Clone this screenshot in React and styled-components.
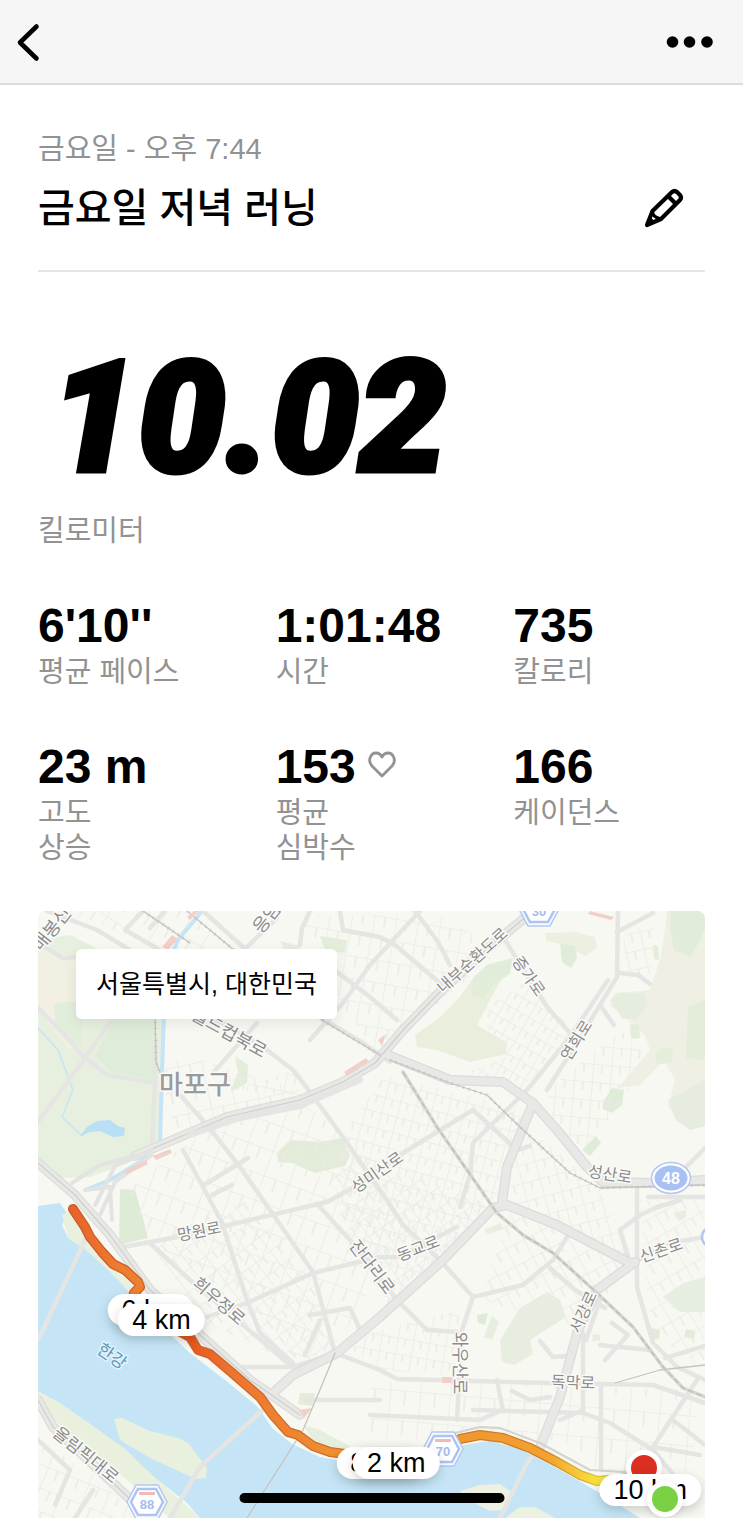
import React from "react";
import styled, { createGlobalStyle } from "styled-components";

const GlobalStyle = createGlobalStyle`
  * { box-sizing: border-box; }
  body {
    margin: 0;
    background: #fff;
    color: #000;
    font-family: "Liberation Sans", "Noto Sans CJK KR", sans-serif;
  }
`;

const NavBar = styled.header`
  display: flex;
  align-items: center;
  justify-content: space-between;
  height: 85px;
  padding: 0 25px 0 14px;
  background: #f6f6f6;
  border-bottom: 2px solid #dcdcdc;
`;

const IconButton = styled.button`
  display: flex;
  padding: 0;
  border: 0;
  background: none;
  color: #000;
  cursor: pointer;
`;

const Content = styled.main`
  padding: 0 38px;
`;

const RunHeader = styled.section`
  padding: 44px 0 32px;
  border-bottom: 2px solid #e5e5e5;
`;

const RunDate = styled.p`
  margin: 0;
  font-size: 29px;
  line-height: 40px;
  color: #929292;
`;

const TitleRow = styled.div`
  display: flex;
  align-items: center;
  justify-content: space-between;
  height: 60px;
  margin-top: 9px;
  padding-right: 18px;
`;

const RunTitle = styled.h1`
  margin: 0;
  font-size: 40px;
  line-height: 60px;
  font-weight: 500;
`;

const Distance = styled.section`
  padding: 56px 0 0;
`;

const DistanceValue = styled.p`
  margin: 0;
  padding: 0 0 6px 12px;
  font-family: Roboto, sans-serif;
  font-size: 156px;
  line-height: 180px;
  font-weight: 900;
  font-style: italic;
  -webkit-text-stroke: 5px #000;
`;

const Label = styled.span`
  display: block;
  font-size: 29px;
  line-height: 35px;
  color: #929292;
  white-space: pre-line;
`;

const StatsGrid = styled.dl`
  display: grid;
  grid-template-columns: repeat(3, 1fr);
  column-gap: 46px;
  row-gap: 47px;
  margin: 47px 0 45px;
`;

const Stat = styled.div`
  display: flex;
  flex-direction: column-reverse;
  justify-content: flex-end;
`;

const StatValue = styled.dd`
  display: flex;
  align-items: center;
  gap: 12px;
  margin: 0;
  font-size: 48px;
  line-height: 59px;
  font-weight: 700;
  white-space: nowrap;
`;

const MapCard = styled.section`
  position: relative;
  aspect-ratio: 667 / 607;
  border-radius: 8px 8px 0 0;
  overflow: hidden;
  background: #f7f8f2;
`;

const MapDrawing = styled.svg`
  display: block;
  width: 100%;
  height: 100%;
`;

const PlaceTag = styled.div`
  position: absolute;
  top: 38px;
  left: 38px;
  padding: 0 20px;
  border-radius: 6px;
  background: #fff;
  box-shadow: 0 4px 14px rgba(0, 0, 0, 0.08);
  font-size: 25px;
  line-height: 70px;
  white-space: nowrap;
`;

const KmPin = styled.span`
  position: absolute;
  left: ${(p) => p.$x}%;
  top: ${(p) => p.$y}%;
  transform: translate(-50%, -50%);
  padding: 0 14px;
  border-radius: 16px;
  background: #fff;
  box-shadow: 0 4px 12px rgba(0, 0, 0, 0.18);
  font-size: 27px;
  line-height: 32px;
  white-space: nowrap;
`;

const EndPin = styled.span`
  position: absolute;
  left: ${(p) => p.$x}%;
  top: ${(p) => p.$y}%;
  transform: translate(-50%, -50%);
  width: 36px;
  height: 36px;
  border: 5px solid #fff;
  border-radius: 50%;
  background: ${(p) => p.$color};
  box-shadow: 0 2px 6px rgba(0, 0, 0, 0.12);
`;

const HomeIndicator = styled.div`
  position: fixed;
  bottom: 15px;
  left: 50%;
  transform: translateX(-50%);
  width: 265px;
  height: 10px;
  border-radius: 5px;
  background: #000;
`;

const STATS = [
  { value: "6'10''", label: "평균 페이스" },
  { value: "1:01:48", label: "시간" },
  { value: "735", label: "칼로리" },
  { value: "23 m", label: "고도\n상승" },
  { value: "153", label: "평균\n심박수", heart: true },
  { value: "166", label: "케이던스" },
];

const PARKS = [
  ["#e7efdf", "38,940 70,935 110,955 165,985 163,1075 158,1145 128,1163 90,1177 60,1178 38,1166"],
  ["#dfecd9", "108,1030 118,1010 155,1010 155,1080 112,1072 95,1056"],
  ["#f1f0e2", "38,948 70,955 85,965 80,1040 70,1050 38,1010"],
  ["#e1eedb", "54,1004 84,1000 82,1045 72,1044 56,1030"],
  ["#e3ecd9", "277,1153 290,1140 320,1142 342,1138 350,1155 345,1166 315,1173 292,1163 278,1162"],
  ["#deebd7", "120,1189 135,1190 142,1215 148,1238 119,1245"],
  ["#e3edda", "235,1056 248,1065 247,1083 230,1092 238,1072"],
  ["#e3edda", "320,936 347,940 345,953 325,950"],
  ["#e7eedf", "280,941 300,946 299,950 284,950"],
  ["#e9eedd", "415,1035 437,1020 460,997 473,978 487,965 513,958 507,972 498,985 490,1000 477,1025 507,1043 506,1054 470,1062 437,1050 417,1047"],
  ["#e2edd9", "473,978 487,965 513,958 510,974 494,984 484,998 472,995"],
  ["#edf0e0", "545,933 575,932 595,937 597,947 586,956 560,944 546,941"],
  ["#deecd8", "560,943 575,946 577,958 571,968 562,962"],
  ["#efefe3", "667,911 705,911 705,1126 690,1130 668,1107 675,1080 664,1060 640,1085 618,1088 650,1050 645,1035 610,1005 615,993 650,990 660,960 665,930"],
  ["#e1edda", "671,911 705,911 705,930 691,957 674,950 670,930"],
  ["#e5eede", "610,1000 620,993 645,993 648,1005 636,1020 622,1018"],
  ["#e3edda", "688,1007 705,1000 705,1060 686,1058"],
  ["#e6ede0", "668,1100 705,1080 705,1126 690,1130 676,1120"],
  ["#e3eedb", "655,1054 664,1047 674,1050 671,1063 657,1064"],
  ["#deecd8", "603,1102 612,1088 624,1090 622,1105 612,1113 603,1109"],
  ["#deecd8", "582,1150 596,1136 601,1143 590,1156"],
  ["#e3edda", "653,945 658,946 659,960 654,959"],
  ["#e3edda", "630,1024 639,1025 640,1038 631,1039"],
  ["#e7eedf", "500,1340 520,1308 547,1292 560,1300 566,1317 530,1340 533,1354 514,1365 502,1362"],
  ["#deebd7", "477,1315 488,1313 485,1325 478,1323"],
  ["#e5eedf", "492,1316 499,1322 492,1340 484,1337"],
  ["#e5eedf", "663,1297 683,1283 705,1277 705,1312 680,1312"],
  ["#e5eedf", "593,1334 600,1335 600,1341 592,1341"],
  ["#e0ecd8", "651,1328 660,1330 659,1339 653,1339"],
  ["#e0ecd8", "686,1329 695,1331 694,1339 684,1337"],
  ["#e5eedf", "673,1213 686,1210 686,1217 679,1221"],
  ["#e8efe0", "484,1230 500,1223 504,1229 488,1234"],
  ["#e3edda", "300,1393 315,1393 313,1406 298,1404"],
];

const WATER = "M38 1206L60 1203 68 1215 62 1225 68 1238 85 1249 110 1270 130 1293 160 1325 190 1353 225 1380 258 1407 272 1428 292 1444 320 1457 360 1464 420 1460 450 1447 490 1441 520 1449 560 1470 600 1493 640 1518H200L186 1502 150 1474 120 1446 90 1424 60 1404 38 1392Z";

const SHORES = [
  ["#e9f0dd", "38,1391 60,1403 90,1424 125,1449 150,1473 200,1518 170,1518 120,1474 80,1442 38,1406"],
  ["#e9f0dd", "114,1419 122,1418 150,1431 178,1438 188,1443 207,1468 206,1478 196,1479 150,1458 120,1440"],
  ["#edf0e2", "460,1491 480,1485 500,1484 512,1492 507,1510 490,1511 472,1502"],
  ["#edf1e0", "505,1518 520,1507 535,1507 555,1518"],
  ["#e9f0dd", "62,1215 73,1210 90,1240 112,1268 135,1287 130,1292 108,1270 84,1248 68,1238"],
  ["#e6efdf", "303,1425 320,1430 355,1449 345,1453 315,1443"],
];

const MAJOR = [
  "M38 1122L85 1058 115 1015 150 965",
  "M38 1008L60 1030 85 1058 108 1075 155 1083",
  "M156 1040L155 1084 152 1147",
  "M203 911L243 947 313 1013 363 1043 390 1062",
  "M277 918L247 947 225 970",
  "M47 911L97 930 130 950M38 943L63 958 90 956",
  "M143 911L125 930 160 950M165 911L150 928",
  "M310 911L302 928 300 945",
  "M340 911L343 930 380 937 395 945 440 983",
  "M420 911L370 965 343 1003 310 1040",
  "M415 911L438 942 450 965",
  "M337 972L370 997 397 1020",
  "M505 940L547 1007 570 1033",
  "M618 911L617 977 583 1033 547 1090",
  "M608 980L570 1037 527 1090 473 1143 470 1175 460 1207",
  "M617 932L653 913M620 973L638 975 650 984M600 1005L614 1025",
  "M183 1000L263 1047 293 1070 307 1088 345 1140 387 1200 403 1225 440 1260 473 1297 462 1330 457 1420",
  "M213 1073L257 1023",
  "M180 1095L207 1125 240 1167 263 1200 313 1272 335 1353",
  "M183 1150L210 1200 222 1223 247 1300 260 1333 293 1363",
  "M204 1185L248 1158M212 1195L232 1185",
  "M123 1247L177 1237 220 1227 327 1202 358 1185 403 1153 473 1110",
  "M473 1110L517 1150 530 1146",
  "M317 1204L350 1240 397 1300 427 1330 457 1332",
  "M150 1243L190 1280 290 1365",
  "M207 1317L247 1303 313 1273 380 1257 400 1257 457 1227",
  "M335 1353L380 1370 397 1379 547 1383 653 1385 705 1403",
  "M243 1367L293 1367 337 1353",
  "M473 1297L523 1285 553 1260 567 1237",
  "M370 1415L480 1420 500 1411M473 1410L583 1413 610 1423 653 1450 690 1495",
  "M697 1380L653 1447 700 1455M673 1420L705 1445",
  "M497 1380L503 1411M512 1391L530 1400 550 1397",
  "M601 1385V1470M600 1345L650 1350M705 1346L665 1358",
  "M637 1187V1287L653 1343 677 1367 705 1380",
  "M630 1263L620 1230 640 1215 662 1205",
  "M633 1263L670 1243 705 1237",
  "M550 1268L575 1290 605 1308M540 1341L553 1357 567 1356M612 1323L628 1335 605 1360",
  "M648 1197H705M655 1208L680 1200M705 1148L675 1178",
  "M267 1406L200 1467 170 1518M85 1240L65 1283 38 1340",
  "M540 1447L527 1463 500 1518",
  "M38 1440L70 1470 55 1505M93 1490L75 1518",
  "M305 1400H380",
  "M583 1333L583 1410 560 1420M600 1300L586 1340",
  "M310 1315L350 1308 360 1330M320 1320L305 1355",
];

const TRUNK = [
  "M135 1156L227 1117 300 1100 343 1082 375 1063 403 1030 437 995 480 955 522 920 545 911",
  "M385 1054L450 1080 503 1082 533 1103 557 1130 587 1167 603 1182 653 1183 705 1180",
  "M533 1103L507 1167 502 1203",
  "M273 1393L293 1375 337 1353 380 1317 443 1260 493 1208 507 1205 557 1225 630 1263",
  "M635 1262L597 1290 577 1333 560 1397 540 1447",
  "M38 1163L75 1195 110 1235 150 1290 200 1335 250 1380 300 1415",
  "M38 1400L53 1427 113 1483 150 1518",
];

const RAILS = [
  "M143 911L190 943M187 911L240 955 317 1017 380 1055",
  "M155 1010L156 1062 161 1075",
  "M390 1060L450 1083 487 1095 520 1127 570 1173 600 1188 705 1185",
  "M335 1353L322 1385 303 1430 247 1518",
  "M615 1383L660 1370 705 1365",
];

const GREENWAY = "M403 1072L437 1127 490 1203 497 1213 523 1235 553 1253 597 1293 633 1327 663 1367 683 1388 705 1397";

const STREET_AREAS = [
  [20, 26, "225,1115 300,1100 385,1170 400,1257 330,1350 300,1362 240,1300 150,1240 125,1190"],
  [-12, 24, "200,1060 300,1090 180,1140 165,1100 165,1060"],
  [-38, 18, "150,1245 245,1200 310,1275 335,1350 290,1362 200,1320"],
  [15, 16, "385,1075 525,1110 500,1200 390,1310 340,1200 345,1130"],
  [-35, 17, "330,1150 500,1205 400,1300 345,1250"],
  [30, 14, "480,1010 530,980 575,1035 520,1090 460,1075 500,1060"],
  [10, 22, "300,915 440,915 500,950 380,1055 345,1010"],
  [-15, 18, "510,1110 600,1190 635,1260 510,1200"],
  [10, 16, "340,1340 460,1310 455,1375 380,1370"],
  [5, 30, "370,1380 700,1390 690,1480 600,1470 560,1440 370,1440"],
  [-30, 20, "640,1200 705,1200 705,1370 650,1330"],
  [-12, 18, "625,930 655,925 650,975 620,970"],
  [22, 22, "38,1440 100,1480 140,1518 38,1518"],
  [32, 24, "70,911 190,911 225,955 150,945"],
  [12, 18, "230,1090 300,1070 300,1095"],
  [-28, 20, "510,1210 630,1265 580,1330 480,1300"],
  [5, 18, "548,1090 620,1030 650,1060 580,1160 550,1120"],
];

const TINTS = [
  "M162 947L172 935 178 939 168 950Z",
  "M187 917L194 911 199 911 190 920Z",
  "M344 1072L366 1058 369 1062 347 1076Z",
  "M153 1156L170 1149 172 1153 156 1160Z",
  "M124 1171L146 1160 148 1164 126 1175Z",
  "M442 1377H453V1383H442Z",
  "M590 911L614 917 611 920 588 914Z",
  "M378 1040L386 1034 382 1046Z",
  "M299 1410L312 1408 304 1418Z",
];

const ROUTE_WEST = "M73 1209L85 1227 90 1237 102 1252 113 1264 125 1270 138 1282 140 1287 134 1293 150 1315 190 1337 198 1350 210 1354 230 1371 260 1397 273 1415 288 1432 298 1435 313 1446 330 1452 345 1454";
const ROUTE_EAST = "M430 1452L460 1439 480 1435 503 1438 530 1448 557 1462 580 1475 597 1481 630 1478";

const ROAD_NAMES = [
  ["매봉신", 52, 929, -52, 18],
  ["응암", 267, 918, -52, 18],
  ["월드컵북로", 229, 1033, 29, 18],
  ["내부순환도로", 472, 960, -42, 16],
  ["증가로", 529, 976, 55, 16],
  ["연희로", 576, 1040, -58, 16],
  ["성미산로", 377, 1172, -35, 16],
  ["성산로", 610, 1174, 9, 16],
  ["망원로", 199, 1231, -11, 16],
  ["희우정로", 219, 1301, 41, 17],
  ["잔다리로", 372, 1267, 53, 17],
  ["동교로", 418, 1248, -21, 16],
  ["신촌로", 661, 1250, -19, 16],
  ["서강로", 583, 1312, -66, 16],
  ["와우산로", 460, 1363, 90, 17],
  ["독막로", 573, 1382, 2, 16],
  ["올림픽대로", 86, 1455, 39, 17],
];

function BackIcon() {
  return (
    <svg width="28" height="40" viewBox="0 0 28 40" fill="none" stroke="currentColor" strokeWidth="4.6" strokeLinecap="round" strokeLinejoin="round" aria-hidden="true">
      <path d="M22.5 4.5L6 20.5L22.5 36.5" />
    </svg>
  );
}

function MoreIcon() {
  return (
    <svg width="52" height="16" viewBox="0 0 52 16" fill="currentColor" aria-hidden="true">
      <circle cx="6.5" cy="8" r="5.8" />
      <circle cx="23.5" cy="8" r="5.8" />
      <circle cx="41" cy="8" r="5.8" />
    </svg>
  );
}

function PencilIcon() {
  return (
    <svg width="44" height="44" viewBox="0 0 44 44" fill="none" stroke="currentColor" strokeWidth="4.2" strokeLinejoin="round" aria-hidden="true">
      <path d="M4 39L9.500 25L29 6Q31.500 4 34 6L37 9Q39 11.500 37 14L18 33Z" />
      <path d="M25 10L33 18" />
      <path d="M9.500 25Q9 31 18 33" strokeWidth="3" />
      <path d="M4 39L7.500 31L12 36Z" fill="currentColor" stroke="none" />
    </svg>
  );
}

function HeartIcon() {
  return (
    <svg width="28" height="32" viewBox="0 0 28 32" fill="none" stroke="#929292" strokeWidth="2.8" strokeLinejoin="round" aria-hidden="true">
      <path d="M14 25L4 15C-1 9 3 2 8 2C11 2 13 4 14 6C15 4 17 2 20 2C25 2 29 9 24 15Z" />
    </svg>
  );
}

function HexShield({ x, y, number }) {
  return (
    <g transform={`translate(${x} ${y})`}>
      <path d="M-11 -17H11L20 0L11 17H-11L-20 0Z" fill="#f8faff" stroke="#b3c8f1" strokeWidth="1.5" />
      <path d="M-9 -13H9L16 0L9 13H-9L-16 0Z" fill="#fff" stroke="#adc4f2" strokeWidth="2.5" />
      <path d="M-8 -10H8V-7H-8Z" fill="#f2b9b9" />
      <text y="7" textAnchor="middle" fontSize="13" fontWeight="700" fill="#a4bdec">{number}</text>
    </g>
  );
}

function RouteMap() {
  return (
    <MapDrawing viewBox="38 911 667 607" preserveAspectRatio="xMidYMid slice" role="img" aria-label="러닝 경로 지도">
      <defs>
        <linearGradient id="heat" gradientUnits="userSpaceOnUse" x1="73" y1="0" x2="600" y2="0">
          <stop offset="0" stopColor="#e8622a" />
          <stop offset="0.09" stopColor="#ee7d2f" />
          <stop offset="0.13" stopColor="#ee8030" />
          <stop offset="0.22" stopColor="#e4571f" />
          <stop offset="0.3" stopColor="#ee7330" />
          <stop offset="0.5" stopColor="#ee9132" />
          <stop offset="0.75" stopColor="#f09731" />
          <stop offset="0.9" stopColor="#f2a22f" />
          <stop offset="0.99" stopColor="#f6e03c" />
        </linearGradient>
        <linearGradient id="heatEdge" gradientUnits="userSpaceOnUse" x1="73" y1="0" x2="600" y2="0">
          <stop offset="0" stopColor="#c95a28" />
          <stop offset="0.9" stopColor="#d07f28" />
          <stop offset="0.99" stopColor="#dcc03a" />
        </linearGradient>
        {STREET_AREAS.map(([angle, size], i) => (
          <pattern key={i} id={`streets${i}`} width={size} height={size} patternUnits="userSpaceOnUse" patternTransform={`rotate(${angle})`}>
            <path d={`M0 0H${size}M0 0V${size}M${size / 2} 0V${size / 2}`} stroke="#ebebe6" strokeWidth="1.6" fill="none" />
          </pattern>
        ))}
      </defs>
      <rect x="38" y="911" width="667" height="607" fill="#f7f8f2" />
      {PARKS.map(([fill, points], i) => <polygon key={i} points={points} fill={fill} />)}
      {STREET_AREAS.map(([, , points], i) => <polygon key={i} points={points} fill={`url(#streets${i})`} />)}
      <path d={WATER} fill="#c5e5f6" />
      {SHORES.map(([fill, points], i) => <polygon key={i} points={points} fill={fill} />)}
      <g fill="none" stroke="#c5e5f6" strokeLinejoin="round">
        <path d="M202 911L178 940 166 970 163 1040 160 1143 140 1162 110 1180 85 1190" strokeWidth="4" />
        <path d="M38 1028L58 1050 73 1090 62 1117 82 1136 90 1126" strokeWidth="1.5" />
      </g>
      <path d="M80 1136L88 1126 97 1121 110 1120 118 1126 125 1128 124 1136 113 1137 100 1131 90 1132Z" fill="#b9dff5" />
      <g fill="none" strokeLinejoin="round" strokeLinecap="round">
        {MAJOR.map((d) => <path key={d} d={d} stroke="#e5e5e3" strokeWidth="4.5" />)}
        {TRUNK.map((d) => <path key={d} d={d} stroke="#dcdcda" strokeWidth="10" />)}
        {TRUNK.map((d) => <path key={d} d={d} stroke="#e8e8e6" strokeWidth="7.5" />)}
        {TRUNK.slice(0, 1).concat(TRUNK.slice(5)).map((d) => <path key={d} d={d} stroke="#cfcfcd" strokeWidth="1.2" />)}
        <path d="M135 1156L100 1165 72 1183M152 1150L115 1166 95 1205M152 1155L115 1182 100 1215M85 1190L110 1187 112 1220" stroke="#e3e3e1" strokeWidth="4" />
        <path d="M190 1135L240 1118 300 1106 360 1080" stroke="#e5e5e3" strokeWidth="6" />
        {RAILS.map((d) => <path key={d} d={d} stroke="#c4c4c1" strokeWidth="1.3" />)}
        {RAILS.slice(0, 3).map((d) => <path key={d} d={d} stroke="#c4c4c1" strokeWidth="3" strokeDasharray="1 5" strokeLinecap="butt" />)}
        <path d={GREENWAY} stroke="#d6d7d1" strokeWidth="3.5" />
        <path d={GREENWAY} stroke="#bfc0ba" strokeWidth="1.5" strokeDasharray="6 3" strokeLinecap="butt" />
        <path d="M455 1433L480 1427 500 1428 540 1443 590 1470 640 1473" stroke="#d3d3d1" strokeWidth="2" />
      </g>
      {TINTS.map((d) => <path key={d} d={d} fill="#f1d0ca" />)}
      <g fill="none" strokeLinejoin="round" strokeLinecap="round">
        {[ROUTE_WEST, ROUTE_EAST].map((d) => (
          <g key={d}>
            <path d={d} stroke="url(#heatEdge)" strokeWidth="10" />
            <path d={d} stroke="url(#heat)" strokeWidth="7.5" />
          </g>
        ))}
      </g>
      <g fill="#8b8b8b" stroke="#fafaf7" strokeWidth="3" strokeLinejoin="round" paintOrder="stroke" textAnchor="middle">
        {ROAD_NAMES.map(([name, x, y, angle, size]) => (
          <text key={name} fontSize={size} transform={`translate(${x} ${y}) rotate(${angle})`} y="6">{name}</text>
        ))}
        <text x="195" y="1094" fontSize="26" fill="#9b9b9b" fontWeight="500">마포구</text>
        <text fontSize="17" fill="#5a97bf" stroke="#e3f2fa" transform="translate(112 1356) rotate(35)" y="6">한강</text>
      </g>
      <HexShield x={539} y={909} number="30" />
      <HexShield x={443} y={1449} number="70" />
      <HexShield x={147} y={1502} number="88" />
      <g>
        <ellipse cx="671" cy="1178" rx="19.5" ry="15.5" fill="#fff" stroke="#b3c6f0" strokeWidth="1.5" />
        <ellipse cx="671" cy="1178" rx="16.5" ry="12.5" fill="#a9c0f2" />
        <text x="671" y="1184" textAnchor="middle" fontSize="16" fontWeight="700" fill="#fff">48</text>
        <circle cx="712" cy="1237" r="10" fill="#fff" stroke="#b3c6f0" strokeWidth="2.5" />
      </g>
    </MapDrawing>
  );
}

export default function App() {
  return (
    <>
      <GlobalStyle />
      <NavBar>
        <IconButton type="button" aria-label="뒤로"><BackIcon /></IconButton>
        <IconButton type="button" aria-label="더 보기"><MoreIcon /></IconButton>
      </NavBar>
      <Content>
        <RunHeader>
          <RunDate>금요일 - 오후 7:44</RunDate>
          <TitleRow>
            <RunTitle>금요일 저녁 러닝</RunTitle>
            <IconButton type="button" aria-label="이름 수정"><PencilIcon /></IconButton>
          </TitleRow>
        </RunHeader>
        <Distance>
          <DistanceValue>10.02</DistanceValue>
          <Label>킬로미터</Label>
        </Distance>
        <StatsGrid>
          {STATS.map(({ value, label, heart }) => (
            <Stat key={label}>
              <Label as="dt">{label}</Label>
              <StatValue>{value}{heart && <HeartIcon />}</StatValue>
            </Stat>
          ))}
        </StatsGrid>
        <MapCard>
          <RouteMap />
          <PlaceTag>서울특별시, 대한민국</PlaceTag>
          <KmPin $x={16.9} $y={65.8}>6 km</KmPin>
          <KmPin $x={18.5} $y={67.3}>4 km</KmPin>
          <KmPin $x={51.2} $y={91}>8 km</KmPin>
          <KmPin $x={53.7} $y={91}>2 km</KmPin>
          <EndPin $x={90.9} $y={91.7} $color="#dc2f22" />
          <KmPin $x={91.8} $y={95.4}>10 km</KmPin>
          <EndPin $x={94} $y={96.9} $color="#7ad143" />
        </MapCard>
      </Content>
      <HomeIndicator />
    </>
  );
}
